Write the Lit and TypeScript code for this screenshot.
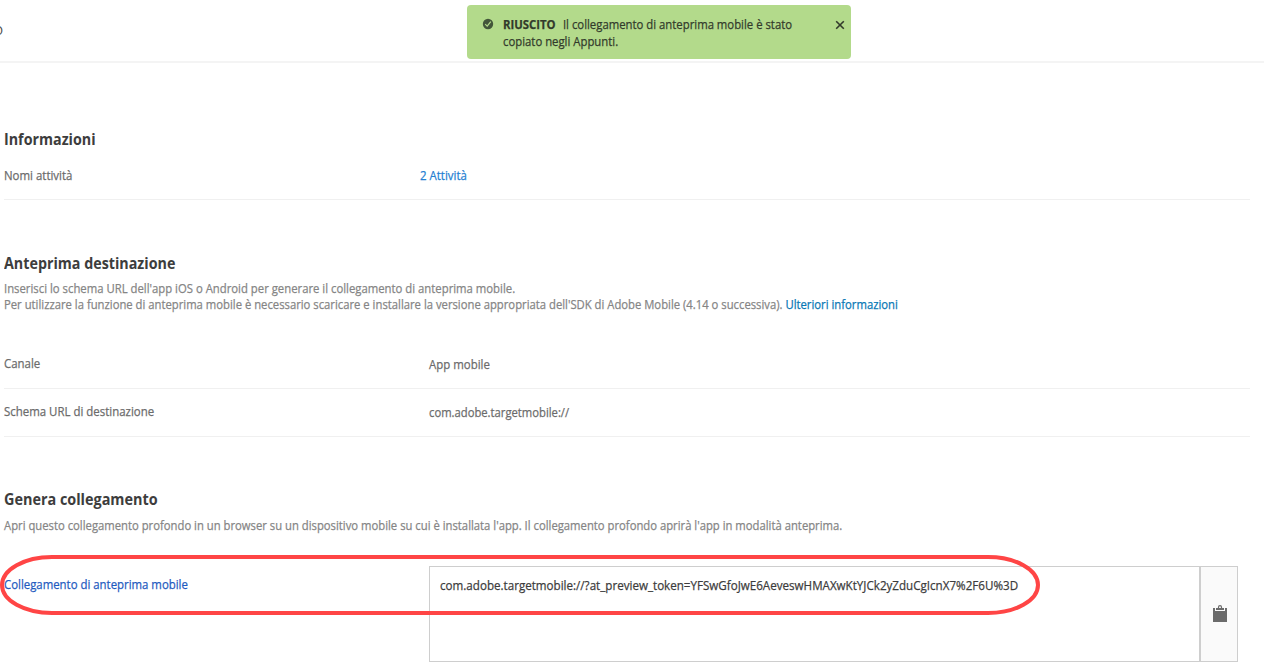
import { LitElement, html, css } from "lit";
import { customElement } from "lit/decorators.js";

// Narrowed text: the face is condensed horizontally from its left edge.
const narrow = css`
  .n {
    display: block;
    width: max-content;
    transform: scaleX(var(--narrow, 0.88));
    transform-origin: 0 50%;
    -webkit-text-stroke: 0.25px;
  }
`;

@customElement("app-toast")
class AppToast extends LitElement {
  static styles = [
    narrow,
    css`
      :host {
        display: flex;
        box-sizing: border-box;
        width: 384px;
        height: 54px;
        padding: 11px 6px 0 15px;
        border-radius: 4px;
        background: #b3da8b;
        color: #323a2b;
        font-size: 13px;
        line-height: 17px;
      }
      .check { width: 12px; height: 12px; margin-top: 2px; flex: none; }
      .message { margin-left: 9px; width: 328px; flex: none; white-space: nowrap; --narrow: 0.872; }
      .message b { font-weight: 700; margin-right: 5px; }
      .close { width: 10px; height: 10px; margin: 4px 0 0 auto; flex: none; }
    `,
  ];
  render() {
    return html`
      <svg class="check" viewBox="0 0 12 12">
        <circle cx="6" cy="6" r="5.2" fill="#43563a" />
        <path d="M3.2 6.2 5.2 8.2 8.8 3.6" fill="none" stroke="#b3da8b" stroke-width="1.2" />
      </svg>
      <div class="message">
        <span class="n"><b>RIUSCITO</b> Il collegamento di anteprima mobile è stato</span>
        <span class="n">copiato negli Appunti.</span>
      </div>
      <svg class="close" viewBox="0 0 10 10">
        <path d="M1.2 1.2 8.8 8.8M8.8 1.2 1.2 8.8" stroke="#323a2b" stroke-width="1.6" />
      </svg>
    `;
  }
}

@customElement("app-root")
class AppRoot extends LitElement {
  static styles = [
    narrow,
    css`
      :host {
        display: block;
        position: relative;
        height: 672px;
        overflow: hidden;
        background: #fff;
        color: #6b6b6b;
        font: 13px/16px "Open Sans", "Noto Sans", sans-serif;
      }
      .topbar {
        box-sizing: border-box;
        height: 63px;
        border-bottom: 2px solid #f4f4f4;
        display: flex;
        padding-top: 22px;
        overflow: hidden;
        color: #4b4b4b;
      }
      .clipped { width: 3px; display: flex; justify-content: flex-end; }
      .toast { position: absolute; left: 467px; top: 5px; }
      .page { padding: 64px 14px 0 4px; }
      h2 {
        margin: 0;
        font-size: 16px;
        line-height: 24px;
        font-weight: 700;
        color: #3d3d3d;
        white-space: nowrap;
        --narrow: 0.893;
      }
      h2 .n { -webkit-text-stroke: 0; }
      .target { margin-top: 51px; }
      .generate { margin-top: 50px; }
      .generate h2 { --narrow: 0.9; }
      .description { margin: 5px 0 29px; color: #858585; white-space: nowrap; --narrow: 0.8675; }
      .description .lead { --narrow: 0.871; }
      .generate .description { margin: 6px 0 33px; }
      .row {
        display: grid;
        grid-template-columns: 425px 1fr;
        align-items: center;
        box-sizing: border-box;
        height: 48px;
        padding-bottom: 3px;
        border-bottom: 1px solid #f0f0f0;
        white-space: nowrap;
      }
      .row.activity { height: 49px; padding-bottom: 0; grid-template-columns: 416px 1fr; }
      .value { padding-top: 2px; }
      .value.url { --narrow: 0.865; }
      .row.activity .value { padding-top: 0; color: #2580d2; }
      .more { color: #0878b5; }
      .field { display: grid; grid-template-columns: 425px 809px; height: 96px; }
      .field-label { padding-top: 10px; color: #1f5bc0; --narrow: 0.876; }
      .box { display: flex; box-sizing: border-box; border: 1px solid #cecece; }
      .token { flex: 1; padding: 10px; color: #3c3c3c; white-space: nowrap; --narrow: 0.893; }
      .copy {
        box-sizing: border-box;
        width: 38px;
        padding: 0 0 1px 2px;
        border-left: 2px solid #cecece;
        background: #fafafa;
        display: flex;
        align-items: center;
        justify-content: center;
      }
      .copy svg { width: 14px; height: 17px; display: block; }
      .highlight { position: absolute; left: 0; top: 555px; width: 1040px; height: 60px; pointer-events: none; }
    `,
  ];
  render() {
    return html`
      <div class="topbar"><span class="clipped">O</span></div>
      <main class="page">
        <section>
          <h2><span class="n">Informazioni</span></h2>
          <div class="row activity">
            <span class="n">Nomi attività</span>
            <div class="value"><span class="n">2 Attività</span></div>
          </div>
        </section>
        <section class="target">
          <h2><span class="n">Anteprima destinazione</span></h2>
          <div class="description">
            <span class="n lead">Inserisci lo schema URL dell'app iOS o Android per generare il collegamento di anteprima mobile.</span>
            <span class="n">Per utilizzare la funzione di anteprima mobile è necessario scaricare e installare la versione appropriata dell'SDK di Adobe Mobile (4.14 o successiva). <span class="more">Ulteriori informazioni</span></span>
          </div>
          <div class="row">
            <span class="n">Canale</span>
            <div class="value"><span class="n">App mobile</span></div>
          </div>
          <div class="row">
            <span class="n">Schema URL di destinazione</span>
            <div class="value url"><span class="n">com.adobe.targetmobile://</span></div>
          </div>
        </section>
        <section class="generate">
          <h2><span class="n">Genera collegamento</span></h2>
          <div class="description">
            <span class="n">Apri questo collegamento profondo in un browser su un dispositivo mobile su cui è installata l'app. Il collegamento profondo aprirà l'app in modalità anteprima.</span>
          </div>
          <div class="field">
            <div class="field-label"><span class="n">Collegamento di anteprima mobile</span></div>
            <div class="box">
              <div class="token"><span class="n">com.adobe.targetmobile://?at_preview_token=YFSwGfoJwE6AeveswHMAXwKtYJCk2yZduCgIcnX7%2F6U%3D</span></div>
              <div class="copy">
                <svg viewBox="0 0 14 17">
                  <path d="M0 3h2v3h10V3h2v14H0z" fill="#6b6b6b" />
                  <path d="M3 3h8v2H3z" fill="#6b6b6b" />
                  <path d="M5.500 3V2.200Q5.500 .7 7 .7T8.500 2.200V3" fill="none" stroke="#6b6b6b" stroke-width="1.200" />
                </svg>
              </div>
            </div>
          </div>
        </section>
      </main>
      <app-toast class="toast"></app-toast>
      <svg class="highlight" viewBox="0 0 1040 60">
        <rect x="2" y="2" width="1036" height="56" rx="50" ry="28" fill="none" stroke="#ff4545" stroke-width="4" />
      </svg>
    `;
  }
}
